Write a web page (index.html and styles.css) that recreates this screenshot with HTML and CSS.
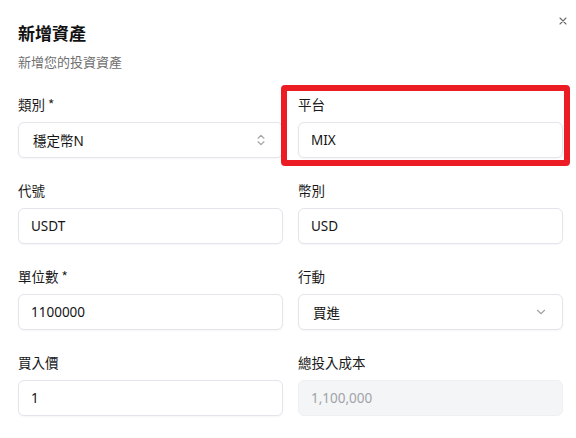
FILE: index.html
```html
<!DOCTYPE html>
<html lang="zh-Hant">
<head>
<meta charset="utf-8">
<link rel="stylesheet" href="styles.css">
</head>
<body>
<div class="dialog">
  <button class="close" aria-label="關閉">
    <svg width="12" height="12" viewBox="0 0 24 24" fill="none" stroke="currentColor" stroke-width="2.2" stroke-linecap="round"><path d="M18 6 6 18M6 6l12 12"/></svg>
  </button>
  <header class="head">
    <h2 class="title">新增資產</h2>
    <p class="desc">新增您的投資資產</p>
  </header>
  <form class="grid">
    <div class="field">
      <label class="label">類別 *</label>
      <div class="control select">
        <span>穩定幣N</span>
        <svg class="ico" width="14" height="14" viewBox="0 0 24 24" fill="none" stroke="currentColor" stroke-width="2" stroke-linecap="round" stroke-linejoin="round"><path d="m7 15 5 5 5-5M7 9l5-5 5 5"/></svg>
      </div>
    </div>
    <div class="field">
      <label class="label">平台</label>
      <div class="control">MIX</div>
    </div>
    <div class="field">
      <label class="label">代號</label>
      <div class="control">USDT</div>
    </div>
    <div class="field">
      <label class="label">幣別</label>
      <div class="control">USD</div>
    </div>
    <div class="field">
      <label class="label">單位數 *</label>
      <div class="control">1100000</div>
    </div>
    <div class="field">
      <label class="label">行動</label>
      <div class="control select">
        <span>買進</span>
        <svg class="ico" width="14" height="14" viewBox="0 0 24 24" fill="none" stroke="currentColor" stroke-width="2" stroke-linecap="round" stroke-linejoin="round"><path d="m6 9 6 6 6-6"/></svg>
      </div>
    </div>
    <div class="field">
      <label class="label">買入價</label>
      <div class="control">1</div>
    </div>
    <div class="field">
      <label class="label">總投入成本</label>
      <div class="control disabled">1,100,000</div>
    </div>
  </form>
  <div class="highlight"></div>
</div>
</body>
</html>
```

FILE: styles.css
```css
* { box-sizing: border-box; }
html, body {
  margin: 0;
  padding: 0;
  background: #ffffff;
}
body {
  font-family: "Noto Sans", "Noto Sans CJK TC", sans-serif;
  color: #0a0a0a;
  width: 576px;
  height: 438px;
  overflow: hidden;
}
.dialog {
  position: relative;
  padding: 19px 0 0 18px;
}
.close {
  position: absolute;
  top: 14px;
  left: 556px;
  width: 14px;
  height: 14px;
  padding: 0;
  border: 0;
  background: none;
  color: #6b6b6b;
  display: flex;
  align-items: center;
  justify-content: center;
}
.head {
  display: flex;
  flex-direction: column;
  gap: 5px;
  margin-bottom: 22px;
}
.title {
  margin: 0;
  font-size: 17px;
  line-height: 28px;
  font-weight: 600;
  font-family: "Noto Sans CJK TC", sans-serif;
  color: #111;
}
.desc {
  margin: 0;
  font-size: 13px;
  line-height: 20px;
  color: #6f6f6f;
  font-family: "Noto Sans CJK TC", sans-serif;
}
.grid {
  display: grid;
  grid-template-columns: 265px 265px;
  column-gap: 15px;
  row-gap: 22px;
}
.field {
  display: flex;
  flex-direction: column;
  gap: 8px;
}
.label {
  font-size: 13.5px;
  line-height: 20px;
  font-weight: 400;
  color: #1a1a1a;
  font-family: "Noto Sans CJK TC", sans-serif;
}
.control {
  height: 36px;
  border: 1px solid #e4e5ec;
  border-radius: 6px;
  padding: 0 12px;
  display: flex;
  align-items: center;
  font-size: 13.5px;
  color: #141414;
  background: #fff;
  box-shadow: 0 1px 2px rgba(0,0,0,0.04);
}
.select {
  justify-content: space-between;
  padding-right: 14px;
}
.select span {
  padding-left: 2px;
}
.ico {
  color: #a3a3a3;
}
.disabled {
  background: #f4f5f7;
  color: #a0a3a8;
  border-color: #eef0f3;
  box-shadow: none;
}
.highlight {
  position: absolute;
  left: 281px;
  top: 85px;
  width: 289px;
  height: 81px;
  border: 6px solid #ec1c24;
  border-radius: 4px;
  pointer-events: none;
}
```
